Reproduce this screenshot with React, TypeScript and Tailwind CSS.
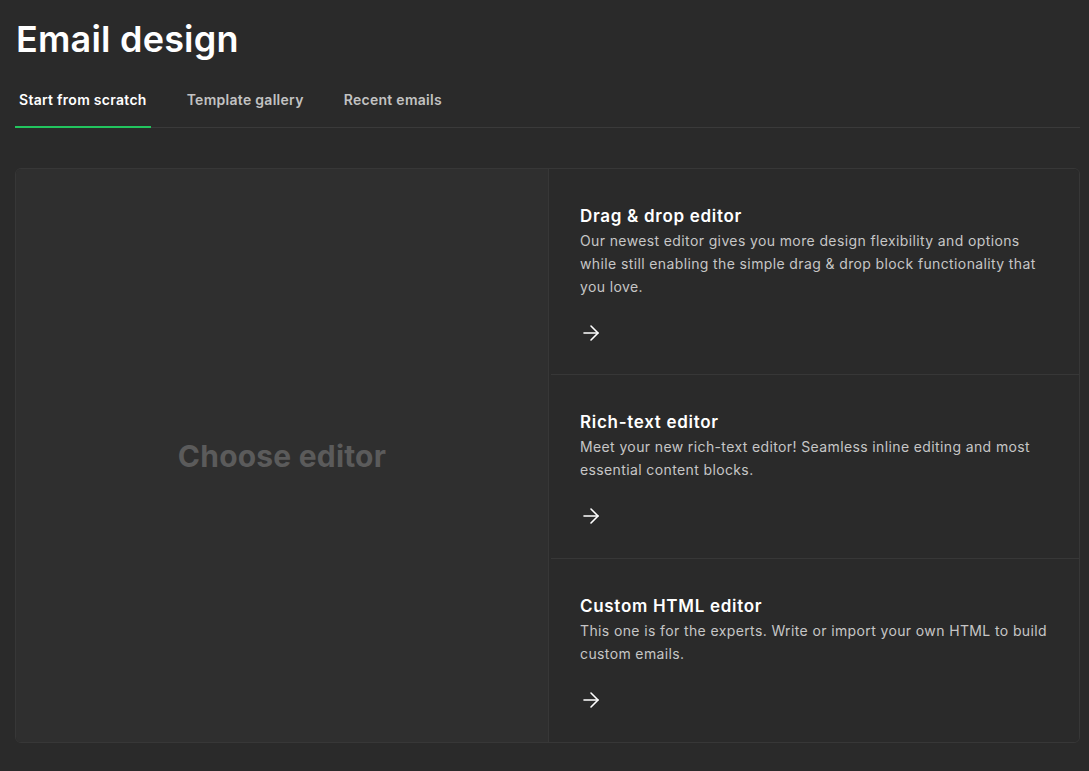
import React from "react";
import { ArrowRight } from "lucide-react";

const rows = [
  {
    title: "Drag & drop editor",
    desc: "Our newest editor gives you more design flexibility and options while still enabling the simple drag & drop block functionality that you love.",
    cls: "pb-[29px]",
  },
  {
    title: "Rich-text editor",
    desc: "Meet your new rich-text editor! Seamless inline editing and most essential content blocks.",
    cls: "pb-[30px] border-t border-[#373737]",
  },
  {
    title: "Custom HTML editor",
    desc: "This one is for the experts. Write or import your own HTML to build custom emails.",
    cls: "pb-[30px] border-t border-[#373737]",
  },
];

export default function App() {
  return (
    <div
      className="min-h-[771px] bg-[#2a2a2a] pl-[15px] pr-[9px] pt-[19px] pb-[28px]"
      style={{ fontFamily: "Inter, 'Noto Sans', sans-serif" }}
    >
      <h1 className="text-[36px] leading-[40px] font-semibold text-white pl-px tracking-[0.2px]">
        Email design
      </h1>
      <div className="mt-[23px] flex gap-8 border-b border-[#3a3a3a]">
        <div className="px-1 pt-2 pb-4 text-[14px] leading-5 font-semibold tracking-[0.28px] text-white border-b-2 border-[#22c55e] -mb-px">
          Start from scratch
        </div>
        <div className="px-1 pt-2 pb-4 text-[14px] leading-5 font-semibold tracking-[0.28px] text-[#c2c2c2]">
          Template gallery
        </div>
        <div className="px-1 pt-2 pb-4 text-[14px] leading-5 font-semibold tracking-[0.28px] text-[#c2c2c2]">
          Recent emails
        </div>
      </div>
      <div className="mt-10 flex rounded-md border border-[#373737] overflow-hidden">
        <div className="w-[533px] shrink-0 bg-[#2f2f2f] border-r border-[#373737] flex items-center justify-center">
          <span className="text-[30px] font-bold text-[#5b5b5b] tracking-[0.2px] pt-px">
            Choose editor
          </span>
        </div>
        <div className="flex-1 flex flex-col bg-[#2a2a2a] pl-[2px]">
          {rows.map((r) => (
            <div key={r.title} className={"pl-[29px] pr-7 pt-[35px] " + r.cls}>
              <div className="text-[17px] leading-6 font-semibold text-white tracking-[0.7px]">
                {r.title}
              </div>
              <p className="mt-px text-[14px] leading-[23px] text-[#c6c6c6] tracking-[0.38px] max-w-[470px] text-pretty">
                {r.desc}
              </p>
              <div className="mt-[23px] -ml-px h-6 w-6 text-white">
                <ArrowRight size={24} strokeWidth={1.6} />
              </div>
            </div>
          ))}
        </div>
      </div>
    </div>
  );
}
